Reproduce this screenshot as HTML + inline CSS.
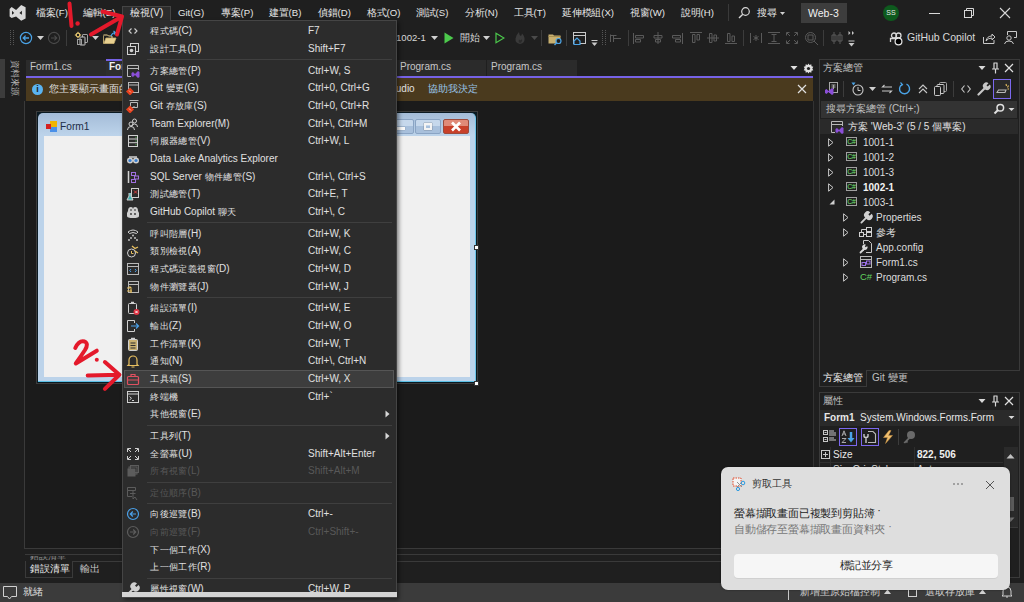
<!DOCTYPE html>
<html><head><meta charset="utf-8">
<style>
*{margin:0;padding:0;box-sizing:border-box}
html,body{width:1024px;height:602px;overflow:hidden;background:#1f1f1f;font-family:"Liberation Sans",sans-serif;color:#e0e0e0;font-size:12px}
.a{position:absolute;white-space:nowrap}
.sx{font-size:10px;color:#dcdcdc;line-height:14px}
.c{font-style:normal;display:inline-block;width:1em;text-align:center}
.L{font-size:10px}
.mb .L{font-size:9.6px}
.mi{font-size:9.4px;line-height:14px;z-index:7}
.mb{top:6px;font-size:9.8px;color:#e6e6e6;line-height:14px}
</style></head><body>
<!-- MENU BAR -->
<div id="menubar">
<svg class="a" style="left:0;top:0" width="34" height="26" viewBox="0 0 34 26"><path d="M9.6 9 L11.6 7.1 L16.1 10.1 L21.2 5 L25.6 7.3 V18.6 L21.2 20.8 L16.1 16.4 L11.6 18.1 L9.6 16.6 Z M12 10.8 L14.2 12.9 L12 14.8 Z M21.9 10.8 V14.8 L19.4 12.9 Z" fill="#d9d9d9" fill-rule="evenodd"/></svg>
<div class="a mb" style="left:36px"><i class="c">檔</i><i class="c">案</i><span class="L">(F)</span></div>
<div class="a mb" style="left:83px"><i class="c">編</i><i class="c">輯</i><span class="L">(E)</span></div>
<div class="a mb" style="left:178px"><span class="L">Git(G)</span></div>
<div class="a mb" style="left:221px"><i class="c">專</i><i class="c">案</i><span class="L">(P)</span></div>
<div class="a mb" style="left:269px"><i class="c">建</i><i class="c">置</i><span class="L">(B)</span></div>
<div class="a mb" style="left:318px"><i class="c">偵</i><i class="c">錯</i><span class="L">(D)</span></div>
<div class="a mb" style="left:367px"><i class="c">格</i><i class="c">式</i><span class="L">(O)</span></div>
<div class="a mb" style="left:416px"><i class="c">測</i><i class="c">試</i><span class="L">(S)</span></div>
<div class="a mb" style="left:465px"><i class="c">分</i><i class="c">析</i><span class="L">(N)</span></div>
<div class="a mb" style="left:514px"><i class="c">工</i><i class="c">具</i><span class="L">(T)</span></div>
<div class="a mb" style="left:562px"><i class="c">延</i><i class="c">伸</i><i class="c">模</i><i class="c">組</i><span class="L">(X)</span></div>
<div class="a mb" style="left:630px"><i class="c">視</i><i class="c">窗</i><span class="L">(W)</span></div>
<div class="a mb" style="left:681px"><i class="c">說</i><i class="c">明</i><span class="L">(H)</span></div>
<div class="a" style="left:728px;top:4px;width:1px;height:17px;background:#3a3a3a"></div>
<div class="a mb" style="left:757px"><i class="c">搜</i><i class="c">尋</i></div>
<div class="a" style="left:801px;top:3px;width:46px;height:20px;background:#3d3d3d"></div>
<div class="a mb" style="left:808px;top:6px;font-size:10.5px;color:#f0f0f0">Web-3</div>
<div class="a" style="left:883px;top:5px;width:16px;height:16px;border-radius:50%;background:#0e5a1e;color:#e8e8e8;font-size:7px;line-height:16px;text-align:center">SS</div>
</div>

<!-- TOOLBAR -->
<svg class="a" style="left:10px;top:30px" width="5" height="16" viewBox="0 0 5 16"><rect x="0" y="0" width="1" height="1" fill="#555"/><rect x="3" y="0" width="1" height="1" fill="#555"/><rect x="0" y="2" width="1" height="1" fill="#555"/><rect x="3" y="2" width="1" height="1" fill="#555"/><rect x="0" y="4" width="1" height="1" fill="#555"/><rect x="3" y="4" width="1" height="1" fill="#555"/><rect x="0" y="6" width="1" height="1" fill="#555"/><rect x="3" y="6" width="1" height="1" fill="#555"/><rect x="0" y="8" width="1" height="1" fill="#555"/><rect x="3" y="8" width="1" height="1" fill="#555"/><rect x="0" y="10" width="1" height="1" fill="#555"/><rect x="3" y="10" width="1" height="1" fill="#555"/><rect x="0" y="12" width="1" height="1" fill="#555"/><rect x="3" y="12" width="1" height="1" fill="#555"/><rect x="0" y="14" width="1" height="1" fill="#555"/><rect x="3" y="14" width="1" height="1" fill="#555"/></svg>
<svg class="a" style="left:19px;top:31px" width="14" height="14" viewBox="0 0 14 14"><circle cx="7" cy="7" r="5.6" fill="none" stroke="#4aa3e6" stroke-width="1.2"/><path d="M10 7 H4.3 M6.6 4.6 L4.2 7 L6.6 9.4" fill="none" stroke="#4aa3e6" stroke-width="1.3"/></svg>
<svg class="a" style="left:37.0px;top:36px" width="7" height="4" viewBox="0 0 7 4"><path d="M0 0 H7 L3.5 4 Z" fill="#d0d0d0"/></svg>
<svg class="a" style="left:47px;top:31px" width="14" height="14" viewBox="0 0 14 14"><circle cx="7" cy="7" r="5.6" fill="none" stroke="#4a4a4a" stroke-width="1.1"/><path d="M4 7 H9.7 M7.4 4.6 L9.8 7 L7.4 9.4" fill="none" stroke="#4a4a4a" stroke-width="1.1"/></svg>
<div class="a" style="left:66px;top:30px;width:1px;height:16px;background:#3c3c3c"></div>
<svg class="a" style="left:74px;top:31px" width="16" height="16" viewBox="0 0 16 16"><rect x="8.5" y="3.5" width="5" height="8" rx="0.5" fill="#1f1f1f" stroke="#a0a0a0"/><rect x="6" y="6" width="5" height="8" rx="0.5" fill="#1f1f1f" stroke="#c8c8c8"/><rect x="3.5" y="8.5" width="4" height="5" fill="none" stroke="#a0a0a0"/><circle cx="4" cy="4" r="1.8" fill="none" stroke="#e8c870" stroke-width="1.2"/><path d="M4 0.8 V2 M4 6 V7.2 M0.8 4 H2 M6 4 H7.2" stroke="#e8c870"/></svg>
<svg class="a" style="left:91.8px;top:36px" width="7" height="4" viewBox="0 0 7 4"><path d="M0 0 H7 L3.5 4 Z" fill="#d0d0d0"/></svg>
<svg class="a" style="left:103px;top:30px" width="14" height="15" viewBox="0 0 14 15"><path d="M0.5 5.5 V13.5 H11 L13 8 H3 L1 13" fill="#e8d090" stroke="#c8b070" stroke-width="0.8"/><path d="M0.5 5 H4.5 L5.5 6 H9 V8" fill="none" stroke="#e8d090"/><path d="M8 6 Q9 3 12 2.5 M10.5 1 L12.5 2.5 L11 4.5" fill="none" stroke="#4aa3e6" stroke-width="1.2"/></svg>
<div class="a mb" style="left:396px;top:31px;color:#d8d8d8"><span class="L">1002-1</span></div>
<svg class="a" style="left:430.5px;top:36px" width="7" height="4" viewBox="0 0 7 4"><path d="M0 0 H7 L3.5 4 Z" fill="#d0d0d0"/></svg>
<svg class="a" style="left:444px;top:32px" width="10" height="12" viewBox="0 0 10 12"><path d="M0.5 0.5 L9.5 6 L0.5 11.5 Z" fill="#4cc94c"/></svg>
<div class="a mb" style="left:460px;top:31px;color:#d8d8d8"><i class="c">開</i><i class="c">始</i></div>
<svg class="a" style="left:482.5px;top:36px" width="7" height="4" viewBox="0 0 7 4"><path d="M0 0 H7 L3.5 4 Z" fill="#d0d0d0"/></svg>
<svg class="a" style="left:495px;top:32px" width="10" height="12" viewBox="0 0 10 12"><path d="M1 1.2 L9 6 L1 10.8 Z" fill="none" stroke="#4cc94c" stroke-width="1.2"/></svg>
<svg class="a" style="left:514px;top:31px" width="12" height="14" viewBox="0 0 12 14"><path d="M6 13 Q1 12 1.5 7.5 Q2 4 5 1 Q5 4 7 5 Q8 3 8 2.5 Q11 5.5 10.5 9 Q10 12.5 6 13 Z" fill="#3a3a3a"/><path d="M6 12 Q4 11 5 8.5 Q7 10 8 8 Q8.5 11 6 12Z" fill="#2a2a2a"/></svg>
<svg class="a" style="left:530.5px;top:36px" width="7" height="4" viewBox="0 0 7 4"><path d="M0 0 H7 L3.5 4 Z" fill="#4a4a4a"/></svg>
<div class="a" style="left:541px;top:30px;width:1px;height:16px;background:#3c3c3c"></div>
<svg class="a" style="left:548px;top:31px" width="15" height="15" viewBox="0 0 15 15"><path d="M0.5 3.5 H5 L6 4.5 H12.5 V12.5 H0.5 Z" fill="#c8b070"/><path d="M0.5 5.5 H12.5" stroke="#a89050"/><circle cx="10.5" cy="10" r="2.5" fill="#1f1f1f" stroke="#4aa3e6" stroke-width="1.2"/><path d="M8.7 11.8 L6.5 14" stroke="#4aa3e6" stroke-width="1.4"/></svg>
<div class="a" style="left:566px;top:30px;width:1px;height:16px;background:#3c3c3c"></div>
<svg class="a" style="left:572px;top:31px" width="16" height="15" viewBox="0 0 16 15"><rect x="1.5" y="1.5" width="12" height="11" fill="none" stroke="#c8c8c8"/><path d="M1.5 4.5 H13.5" stroke="#c8c8c8"/><path d="M2 10 L5 7 L8 10 V13.5 H2 Z" fill="#1f1f1f" stroke="#4aa3e6" stroke-width="1.2"/></svg>
<svg class="a" style="left:591px;top:40px" width="7" height="7" viewBox="0 0 7 7"><path d="M0.5 0.5 H6.5" stroke="#c8c8c8"/><path d="M0.5 2.5 H6.5 L3.5 6 Z" fill="#c8c8c8"/></svg>
<svg class="a" style="left:602px;top:30px" width="5" height="16" viewBox="0 0 5 16"><rect x="0" y="0" width="1" height="1" fill="#555"/><rect x="3" y="0" width="1" height="1" fill="#555"/><rect x="0" y="2" width="1" height="1" fill="#555"/><rect x="3" y="2" width="1" height="1" fill="#555"/><rect x="0" y="4" width="1" height="1" fill="#555"/><rect x="3" y="4" width="1" height="1" fill="#555"/><rect x="0" y="6" width="1" height="1" fill="#555"/><rect x="3" y="6" width="1" height="1" fill="#555"/><rect x="0" y="8" width="1" height="1" fill="#555"/><rect x="3" y="8" width="1" height="1" fill="#555"/><rect x="0" y="10" width="1" height="1" fill="#555"/><rect x="3" y="10" width="1" height="1" fill="#555"/><rect x="0" y="12" width="1" height="1" fill="#555"/><rect x="3" y="12" width="1" height="1" fill="#555"/><rect x="0" y="14" width="1" height="1" fill="#555"/><rect x="3" y="14" width="1" height="1" fill="#555"/></svg>
<svg class="a" style="left:609px;top:31px" width="14" height="14" viewBox="0 0 14 14"><path d="M1.5 3.5 V11 M1.5 4.5 H7.5 M4.5 4.5 V11 M4.5 7.5 H12" fill="none" stroke="#5a5a5a"/></svg>
<div class="a" style="left:628px;top:30px;width:1px;height:16px;background:#3c3c3c"></div>
<svg class="a" style="left:632px;top:31px" width="14" height="14" viewBox="0 0 14 14"><path d="M1.5 2 V13 M3.5 4.5 H11.5 V7 H3.5 Z M3.5 8.5 H8.5 V11 H3.5 Z" fill="none" stroke="#5a5a5a"/></svg>
<svg class="a" style="left:651px;top:31px" width="14" height="14" viewBox="0 0 14 14"><path d="M7 1 V13 M3 4.5 H11 V7 H3 Z M4.5 8.5 H9.5 V11 H4.5 Z" fill="none" stroke="#5a5a5a"/></svg>
<svg class="a" style="left:670px;top:31px" width="14" height="14" viewBox="0 0 14 14"><path d="M12.5 2 V13 M2.5 4.5 H10.5 V7 H2.5 Z M5.5 8.5 H10.5 V11 H5.5 Z" fill="none" stroke="#5a5a5a"/></svg>
<svg class="a" style="left:689px;top:31px" width="14" height="14" viewBox="0 0 14 14"><path d="M1 1.5 H13 M3.5 3.5 V11.5 H6 V3.5 Z M8 3.5 V9 H10.5 V3.5 Z" fill="none" stroke="#5a5a5a"/></svg>
<svg class="a" style="left:706px;top:31px" width="14" height="14" viewBox="0 0 14 14"><path d="M1 7 H13 M3.5 2.5 V11.5 H6 V2.5 Z M8 4 V10 H10.5 V4 Z" fill="none" stroke="#5a5a5a"/></svg>
<svg class="a" style="left:724px;top:31px" width="14" height="14" viewBox="0 0 14 14"><path d="M1 12.5 H13 M3.5 2.5 V10.5 H6 V2.5 Z M8 5 V10.5 H10.5 V5 Z" fill="none" stroke="#5a5a5a"/></svg>
<div class="a" style="left:743px;top:30px;width:1px;height:16px;background:#3c3c3c"></div>
<svg class="a" style="left:749px;top:31px" width="14" height="14" viewBox="0 0 14 14"><path d="M1.5 2 V12 M12.5 2 V12 M7 4 V10 M4.5 5.5 L9.5 8.5 M9.5 5.5 L4.5 8.5" fill="none" stroke="#5a5a5a"/></svg>
<svg class="a" style="left:767px;top:31px" width="14" height="14" viewBox="0 0 14 14"><path d="M1 1.5 H13 M1 12.5 H13 M7 3 V11 M4.5 3.5 H9.5 M4.5 10.5 H9.5" fill="none" stroke="#5a5a5a"/></svg>
<svg class="a" style="left:785px;top:31px" width="14" height="14" viewBox="0 0 14 14"><path d="M1.5 4.5 V1.5 H4.5 M9.5 1.5 H12.5 V4.5 M12.5 9.5 V12.5 H9.5 M4.5 12.5 H1.5 V9.5 M2 2 L5 5 M12 2 L9 5 M12 12 L9 9 M2 12 L5 9" fill="none" stroke="#5a5a5a"/></svg>
<svg class="a" style="left:804px;top:31px" width="15" height="15" viewBox="0 0 15 15"><circle cx="6.5" cy="6.5" r="5" fill="none" stroke="#5a5a5a"/><path d="M10 10 L14 14 M4 4 H9 V9 H4 Z" fill="none" stroke="#5a5a5a"/></svg>
<div class="a" style="left:823px;top:30px;width:1px;height:16px;background:#3c3c3c"></div>
<svg class="a" style="left:830px;top:31px" width="14" height="14" viewBox="0 0 14 14"><path d="M4 1 V13 M10 1 V13 M2 4 H6 V10 H2 Z M8 4 H12 V10 H8 Z" fill="none" stroke="#5a5a5a"/></svg>
<svg class="a" style="left:848px;top:30px" width="7" height="18" viewBox="0 0 7 18"><path d="M0.5 1 L2.5 3 L0.5 5 Z M4 1 L6 3 L4 5 Z" fill="#c8c8c8"/><path d="M0.5 11 H6.5" stroke="#c8c8c8"/><path d="M0.5 13 H6.5 L3.5 16.5 Z" fill="#c8c8c8"/></svg>
<svg class="a" style="left:889px;top:31px" width="15" height="15" viewBox="0 0 15 15"><circle cx="5" cy="4.5" r="2.5" fill="none" stroke="#d8d8d8" stroke-width="1.3"/><circle cx="9.5" cy="4.5" r="2.5" fill="none" stroke="#d8d8d8" stroke-width="1.3"/><path d="M1.5 11 V7.5 H12" fill="none" stroke="#d8d8d8" stroke-width="1.3"/><circle cx="9.5" cy="10.5" r="3.4" fill="#000" stroke="#e8e8e8" stroke-width="1.2"/></svg>
<div class="a" style="left:907px;top:30px;font-size:10.5px;color:#d8d8d8;line-height:14px">GitHub Copilot</div>
<svg class="a" style="left:982px;top:31px" width="14" height="14" viewBox="0 0 14 14"><path d="M1.5 6 V12.5 H12 V9" fill="none" stroke="#c8c8c8"/><path d="M4 10 Q5 5 10 5 V3 L13 6 L10 9 V7 Q6 7 4 10 Z" fill="none" stroke="#c8c8c8"/></svg>
<svg class="a" style="left:1003px;top:30px" width="15" height="15" viewBox="0 0 15 15"><path d="M4.5 5 V1.5 H13.5 V7.5 H11" fill="none" stroke="#c8c8c8"/><circle cx="6" cy="8" r="2.2" fill="none" stroke="#c8c8c8"/><path d="M1.5 14 Q2 11 6 11 Q10 11 10.5 14" fill="none" stroke="#c8c8c8"/></svg>
<svg class="a" style="left:738px;top:6px" width="13" height="13" viewBox="0 0 13 13"><circle cx="7.5" cy="5.5" r="3.8" fill="none" stroke="#d8d8d8" stroke-width="1.2"/><path d="M4.8 8.2 L1 12" stroke="#d8d8d8" stroke-width="1.4"/></svg>
<svg class="a" style="left:780px;top:12px" width="5" height="3" viewBox="0 0 5 3"><path d="M0 0 H5 L2.5 3 Z" fill="#d0d0d0"/></svg>
<div class="a" style="left:929px;top:13px;width:11px;height:1px;background:#d8d8d8"></div>
<svg class="a" style="left:963px;top:7px" width="12" height="12" viewBox="0 0 12 12"><path d="M3.5 3 V1.5 H10.5 V8.5 H9" fill="none" stroke="#d8d8d8"/><rect x="1.5" y="3.5" width="7" height="7" fill="none" stroke="#d8d8d8"/></svg>
<svg class="a" style="left:999px;top:7px" width="12" height="12" viewBox="0 0 12 12"><path d="M1 1 L11 11 M11 1 L1 11" stroke="#d8d8d8" stroke-width="1.1"/></svg>
<!-- LEFT STRIP -->
<div class="a" style="left:0;top:59px;width:5px;height:39px;background:#3c3c3c"></div>
<div class="a" style="left:20px;top:60px;font-size:9px;color:#b0b0b0;line-height:10px;transform-origin:0 0;transform:rotate(90deg)"><i class="c">資</i><i class="c">料</i><i class="c">來</i><i class="c">源</i></div>
<!-- EDITOR BORDER -->
<div class="a" style="left:24px;top:101px;width:1px;height:448px;background:#3a3a3a"></div>
<div class="a" style="left:24px;top:548px;width:790px;height:1px;background:#3a3a3a"></div>
<!-- TABS -->
<div class="a" style="left:26px;top:60px;width:80px;height:16px;background:#2b2b2b"></div>
<div class="a" style="left:30px;top:60px;font-size:10px;color:#c8c8c8;line-height:14px">Form1.cs</div>
<div class="a" style="left:106px;top:59px;width:86px;height:17px;background:#2e2e2e;border-top:2px solid #7662e6"></div>
<div class="a" style="left:109px;top:60px;font-size:10px;color:#f0f0f0;font-weight:bold;line-height:14px">Form1.cs [<i class="c">設</i><i class="c">計</i>]</div>
<div class="a" style="left:396px;top:60px;width:90px;height:16px;background:#2b2b2b"></div>
<div class="a" style="left:400px;top:60px;font-size:10px;color:#c8c8c8;line-height:14px">Program.cs</div>
<div class="a" style="left:487px;top:60px;width:90px;height:16px;background:#2b2b2b"></div>
<div class="a" style="left:491px;top:60px;font-size:10px;color:#c8c8c8;line-height:14px">Program.cs</div>
<div class="a" style="left:26px;top:76px;width:787px;height:2px;background:#7662e6"></div>
<!-- INFOBAR -->
<div class="a" style="left:26px;top:78px;width:787px;height:23px;background:#4a3a1e"></div>
<div class="a" style="left:32px;top:84px;width:11px;height:11px;border-radius:50%;background:#5ab4f0;color:#1a1a1a;font-size:9px;line-height:11px;text-align:center;font-weight:bold">i</div>
<div class="a" style="left:49px;top:82px;width:73px;overflow:hidden;font-size:10px;color:#e0e0e0;line-height:14px"><i class="c">您</i><i class="c">主</i><i class="c">要</i><i class="c">顯</i><i class="c">示</i><i class="c">畫</i><i class="c">面</i><i class="c">的</i><i class="c">縮</i><i class="c">放</i><i class="c">比</i><i class="c">例</i></div><div class="a" style="left:393px;top:82px;font-size:10px;color:#e0e0e0;line-height:14px">tudio</div>
<div class="a" style="left:428px;top:82px;font-size:10px;color:#98c4e8;line-height:14px"><i class="c">協</i><i class="c">助</i><i class="c">我</i><i class="c">決</i><i class="c">定</i></div>
<svg class="a" style="left:797px;top:84px" width="10" height="10" viewBox="0 0 10 10"><path d="M1 1 L9 9 M9 1 L1 9" stroke="#e0e0e0" stroke-width="1.2"/></svg>
<svg class="a" style="left:790px;top:65px" width="8" height="6" viewBox="0 0 8 6"><path d="M0.5 1 H7.5 L4 5 Z" fill="#e0e0e0"/></svg>
<svg class="a" style="left:803px;top:63px" width="11" height="11" viewBox="0 0 11 11"><path d="M5.5 0.5 L6.5 2 L8.3 1.3 L8.5 3.2 L10.3 3.8 L9.3 5.5 L10.3 7.2 L8.5 7.8 L8.3 9.7 L6.5 9 L5.5 10.5 L4.5 9 L2.7 9.7 L2.5 7.8 L0.7 7.2 L1.7 5.5 L0.7 3.8 L2.5 3.2 L2.7 1.3 L4.5 2 Z" fill="#e0e0e0"/><circle cx="5.5" cy="5.5" r="1.6" fill="#1f1f1f"/></svg>

<!-- DESIGNER FORM -->
<div class="a" style="left:25px;top:101px;width:788px;height:447px;background:#1b1b1b"></div>
<div class="a" style="left:813px;top:101px;width:1px;height:482px;background:#333"></div>
<div class="a" style="left:36px;top:111px;width:442px;height:273px;border:1px solid #3c3c3c"></div>
<div class="a" style="left:37px;top:112px;width:440px;height:271px;background:#0b1a22"></div>
<div class="a" style="left:38px;top:113px;width:438px;height:269px;border-radius:5px 5px 0 0;background:linear-gradient(#a4bcd8,#bcd3ea 22px,#bcd3ea);border-bottom:1px solid #5bc0e6;border-right:1px solid #6cc4e8"></div>
<div class="a" style="left:44px;top:136px;width:426px;height:241px;background:#f0f0f0"></div>
<svg class="a" style="left:45px;top:120px" width="13" height="13" viewBox="0 0 13 13"><rect x="5" y="1" width="7" height="6" fill="#f0b400"/><rect x="5" y="7" width="7" height="5" fill="#4a90e8"/><rect x="1" y="4" width="5" height="5" fill="#d42020"/></svg>
<div class="a" style="left:60px;top:120px;font-size:10.2px;color:#1e2e48;line-height:14px">Form1</div>
<div class="a" style="left:388px;top:119px;width:26px;height:15px;border:1px solid #8aa4c4;border-radius:2px;background:linear-gradient(#c6d8ec 50%,#a8c0dc 50%)"></div>
<div class="a" style="left:393px;top:127px;width:12px;height:3px;background:#fafafa;box-shadow:0 0 1px #555"></div>
<div class="a" style="left:415px;top:119px;width:26px;height:15px;border:1px solid #8aa4c4;border-radius:2px;background:linear-gradient(#c6d8ec 50%,#a8c0dc 50%)"></div>
<div class="a" style="left:424px;top:123px;width:8px;height:7px;border:2px solid #f4f4f4;box-shadow:0 0 1px #444"></div>
<div class="a" style="left:443px;top:119px;width:26px;height:15px;border:1px solid #9c4a3c;border-radius:2px;background:linear-gradient(#e08a78 45%,#c8402a 45%)"></div>
<svg class="a" style="left:450px;top:121px" width="12" height="11" viewBox="0 0 12 11"><path d="M2 1.5 L10 9.5 M10 1.5 L2 9.5" stroke="#fff" stroke-width="2.6"/></svg>
<div class="a" style="left:474px;top:245px;width:5px;height:5px;background:#fff;border:1px solid #333"></div>
<div class="a" style="left:474px;top:381px;width:5px;height:5px;background:#fff;border:1px solid #333"></div>
<!-- BOTTOM PANEL -->
<div class="a" style="left:25px;top:554px;width:790px;height:1px;background:#3a3a3a"></div>
<div class="a" style="left:25px;top:561px;width:48px;height:17px;border:1px solid #3a3a3a;border-top:none"></div>
<div class="a" style="left:73px;top:561px;width:742px;height:1px;background:#3a3a3a"></div>
<div class="a" style="left:30px;top:562px;font-size:10px;color:#e8e8e8;line-height:14px"><i class="c">錯</i><i class="c">誤</i><i class="c">清</i><i class="c">單</i></div>
<div class="a" style="left:80px;top:562px;font-size:10px;color:#c8c8c8;line-height:14px"><i class="c">輸</i><i class="c">出</i></div>
<div class="a" style="left:30px;top:556px;height:5px;overflow:hidden"><div style="margin-top:-5px;font-size:9px;color:#909090;line-height:10px"><i class="c">錯</i><i class="c">誤</i><i class="c">清</i><i class="c">單</i></div></div>
<!-- STATUS BAR -->
<div class="a" style="left:0;top:583px;width:1024px;height:19px;background:#3b3b3b"></div>
<svg class="a" style="left:2px;top:585px" width="16" height="16" viewBox="0 0 16 16"><path d="M1.5 1.5 H14.5 V11.5 H9.5 L7.5 14 L5.5 11.5 H1.5 Z" fill="none" stroke="#d0d0d0" stroke-width="1"/></svg>
<div class="a" style="left:23px;top:585px;font-size:10px;color:#e0e0e0;line-height:14px"><i class="c">就</i><i class="c">緒</i></div>
<div class="a" style="left:788px;top:590px;width:1px;height:10px;background:#c8c8c8"></div>
<div class="a" style="left:800px;top:585px;font-size:10px;color:#d0d0d0;line-height:14px"><i class="c">新</i><i class="c">增</i><i class="c">至</i><i class="c">原</i><i class="c">始</i><i class="c">檔</i><i class="c">控</i><i class="c">制</i><svg width="7" height="5" viewBox="0 0 7 5" style="margin-left:4px;vertical-align:1px"><path d="M0 5 H7 L3.5 0.5 Z" fill="#d0d0d0"/></svg></div>
<div class="a" style="left:908px;top:585px;width:9px;height:12px;border:1px solid #d0d0d0"></div>
<div class="a" style="left:925px;top:585px;font-size:10px;color:#d0d0d0;line-height:14px"><i class="c">選</i><i class="c">取</i><i class="c">存</i><i class="c">放</i><i class="c">庫</i><svg width="7" height="5" viewBox="0 0 7 5" style="margin-left:4px;vertical-align:1px"><path d="M0 5 H7 L3.5 0.5 Z" fill="#d0d0d0"/></svg></div>
<svg class="a" style="left:1000px;top:585px" width="14" height="14" viewBox="0 0 14 14"><path d="M3 10 V6 A4 4 0 0 1 11 6 V10 L12 11 H2 Z M6 12 H8" fill="none" stroke="#d0d0d0"/></svg>

<!-- SOLUTION EXPLORER -->
<div class="a" style="left:819px;top:59px;width:201px;height:312px;border:1px solid #3a3a3a"></div>
<div class="a" style="left:823px;top:61px;font-size:10px;color:#c0c0c0;line-height:14px"><i class="c">方</i><i class="c">案</i><i class="c">總</i><i class="c">管</i></div>
<svg class="a" style="left:978px;top:65px" width="8" height="6" viewBox="0 0 8 6"><path d="M0.5 1 H7.5 L4 5 Z" fill="#d8d8d8"/></svg>
<svg class="a" style="left:991px;top:62px" width="9" height="12" viewBox="0 0 9 12"><path d="M2.5 1 H6.5 M3 1 V7 M6 1 V7 M1 7 H8 M4.5 7 V11.5" fill="none" stroke="#d8d8d8" stroke-width="1.2"/></svg>
<svg class="a" style="left:1004px;top:63px" width="10" height="10" viewBox="0 0 10 10"><path d="M1 1 L9 9 M9 1 L1 9" stroke="#e0e0e0" stroke-width="1.2"/></svg>
<div class="a" style="left:993px;top:79px;width:18px;height:20px;border:1px solid #7b68ee;background:#2a2a2a"></div>
<div class="a" style="left:821px;top:101px;width:196px;height:17px;background:#333333"></div>
<div class="a" style="left:826px;top:102px;font-size:10px;color:#c0c0c0;line-height:14px"><i class="c">搜</i><i class="c">尋</i><i class="c">方</i><i class="c">案</i><i class="c">總</i><i class="c">管</i> (Ctrl+;)</div>
<svg class="a" style="left:993px;top:103px" width="12" height="12" viewBox="0 0 12 12"><circle cx="7.3" cy="4.7" r="3.3" fill="none" stroke="#e0e0e0" stroke-width="1.5"/><path d="M5 7 L1.5 10.5" stroke="#e0e0e0" stroke-width="2"/></svg>
<svg class="a" style="left:1008px;top:107px" width="7" height="5" viewBox="0 0 7 5"><path d="M0.5 1 H6.5 L3.5 4 Z" fill="#d8d8d8"/></svg>
<div class="a" style="left:820px;top:119px;width:198px;height:15px;background:#2a2a2a"></div>
<svg class="a" style="left:830px;top:120px" width="14" height="14" viewBox="0 0 14 14"><path d="M12.5 6 V1.5 H1.5 V12.5 H5" fill="none" stroke="#b8b8b8"/><path d="M1.5 4.5 H12.5" stroke="#b8b8b8"/><path d="M5.5 9 L7 8 L9 10 L12 7 L13.5 8 V13 L12 14 L9 11 L7 13 L5.5 12 Z" fill="#8b4fd8"/></svg>
<div class="a sx" style="left:848px;top:120px;color:#e0e0e0"><i class="c">方</i><i class="c">案</i> 'Web-3' (5 / 5 <i class="c">個</i><i class="c">專</i><i class="c">案</i>)</div>
<svg class="a" style="left:828px;top:138px" width="6" height="9" viewBox="0 0 6 9"><path d="M0.6 0.8 L5 4.5 L0.6 8.2 Z" fill="none" stroke="#c8c8c8" stroke-width="1"/></svg><div class="a" style="left:846px;top:137px;width:11px;height:9px;border:1px solid #a0a0a0;background:#1f1f1f;color:#74e474;font-size:7px;line-height:7px;text-align:center;letter-spacing:-0.3px">C#</div><div class="a sx" style="left:863px;top:136px;">1001-1</div><svg class="a" style="left:828px;top:153px" width="6" height="9" viewBox="0 0 6 9"><path d="M0.6 0.8 L5 4.5 L0.6 8.2 Z" fill="none" stroke="#c8c8c8" stroke-width="1"/></svg><div class="a" style="left:846px;top:152px;width:11px;height:9px;border:1px solid #a0a0a0;background:#1f1f1f;color:#74e474;font-size:7px;line-height:7px;text-align:center;letter-spacing:-0.3px">C#</div><div class="a sx" style="left:863px;top:151px;">1001-2</div><svg class="a" style="left:828px;top:168px" width="6" height="9" viewBox="0 0 6 9"><path d="M0.6 0.8 L5 4.5 L0.6 8.2 Z" fill="none" stroke="#c8c8c8" stroke-width="1"/></svg><div class="a" style="left:846px;top:167px;width:11px;height:9px;border:1px solid #a0a0a0;background:#1f1f1f;color:#74e474;font-size:7px;line-height:7px;text-align:center;letter-spacing:-0.3px">C#</div><div class="a sx" style="left:863px;top:166px;">1001-3</div><svg class="a" style="left:828px;top:183px" width="6" height="9" viewBox="0 0 6 9"><path d="M0.6 0.8 L5 4.5 L0.6 8.2 Z" fill="none" stroke="#c8c8c8" stroke-width="1"/></svg><div class="a" style="left:846px;top:182px;width:11px;height:9px;border:1px solid #a0a0a0;background:#1f1f1f;color:#74e474;font-size:7px;line-height:7px;text-align:center;letter-spacing:-0.3px">C#</div><div class="a sx" style="left:863px;top:181px;font-weight:bold;color:#f4f4f4">1002-1</div><svg class="a" style="left:829px;top:199px" width="6" height="6" viewBox="0 0 6 6"><path d="M5.5 0.5 V5.5 H0.5 Z" fill="#d0d0d0"/></svg><div class="a" style="left:846px;top:197px;width:11px;height:9px;border:1px solid #a0a0a0;background:#1f1f1f;color:#74e474;font-size:7px;line-height:7px;text-align:center;letter-spacing:-0.3px">C#</div><div class="a sx" style="left:863px;top:196px">1003-1</div><svg class="a" style="left:843px;top:213px" width="6" height="9" viewBox="0 0 6 9"><path d="M0.6 0.8 L5 4.5 L0.6 8.2 Z" fill="none" stroke="#c8c8c8" stroke-width="1"/></svg><svg class="a" style="left:860px;top:211px" width="13" height="13" viewBox="0 0 14 14"><path d="M1.5 12.5 L6.5 7.5" stroke="#d0d0d0" stroke-width="2" stroke-linecap="round"/><path d="M5.5 7 A3.8 3.8 0 0 1 11 1.5 L9 3.6 L10.4 5 L12.5 3 A3.8 3.8 0 0 1 7 8.5 Z" fill="#d0d0d0"/></svg><div class="a sx" style="left:876px;top:211px">Properties</div><svg class="a" style="left:843px;top:228px" width="6" height="9" viewBox="0 0 6 9"><path d="M0.6 0.8 L5 4.5 L0.6 8.2 Z" fill="none" stroke="#c8c8c8" stroke-width="1"/></svg><svg class="a" style="left:859px;top:226px" width="14" height="12" viewBox="0 0 14 12"><rect x="0.5" y="6.5" width="4" height="4" fill="none" stroke="#d0d0d0"/><rect x="7.5" y="1.5" width="5" height="4" fill="none" stroke="#d0d0d0"/><rect x="7.5" y="6.5" width="5" height="4" fill="none" stroke="#d0d0d0"/><path d="M4.5 8.5 H7.5 M2.5 6.5 V3.5 H7.5" fill="none" stroke="#d0d0d0"/></svg><div class="a sx" style="left:876px;top:226px"><i class="c">參</i><i class="c">考</i></div><svg class="a" style="left:859px;top:240px" width="14" height="14" viewBox="0 0 14 14"><path d="M4.5 4 V0.5 H9.5 L12.5 3.5 V12.5 H7" fill="none" stroke="#c8c8c8"/><path d="M1.5 12.5 L4.5 9.5" stroke="#d8d8d8" stroke-width="1.8" stroke-linecap="round"/><path d="M3.5 8.5 A2.6 2.6 0 0 1 7 4.8 L5.8 6.2 L6.8 7.2 L8.2 6 A2.6 2.6 0 0 1 4.5 9.5 Z" fill="#d8d8d8"/></svg><div class="a sx" style="left:876px;top:241px">App.config</div><svg class="a" style="left:843px;top:258px" width="6" height="9" viewBox="0 0 6 9"><path d="M0.6 0.8 L5 4.5 L0.6 8.2 Z" fill="none" stroke="#c8c8c8" stroke-width="1"/></svg><svg class="a" style="left:860px;top:256px" width="12" height="12" viewBox="0 0 12 12"><rect x="0.5" y="0.5" width="11" height="11" fill="none" stroke="#b8b8b8"/><path d="M0.5 3.5 H11.5" stroke="#b8b8b8"/><rect x="2" y="6.5" width="3.5" height="3" fill="none" stroke="#9b6fe8"/><rect x="6.5" y="5" width="3.5" height="3" fill="none" stroke="#9b6fe8"/></svg><div class="a sx" style="left:876px;top:256px">Form1.cs</div><svg class="a" style="left:843px;top:273px" width="6" height="9" viewBox="0 0 6 9"><path d="M0.6 0.8 L5 4.5 L0.6 8.2 Z" fill="none" stroke="#c8c8c8" stroke-width="1"/></svg><div class="a" style="left:860px;top:271px;font-size:9.5px;color:#5fd35f;line-height:12px">C#</div><div class="a sx" style="left:876px;top:271px">Program.cs</div>
<div class="a" style="left:819px;top:370px;width:48px;height:17px;border:1px solid #3a3a3a;border-top:none;background:#1f1f1f"></div>
<div class="a" style="left:823px;top:371px;font-size:10px;color:#e8e8e8;line-height:14px"><i class="c">方</i><i class="c">案</i><i class="c">總</i><i class="c">管</i></div>
<div class="a" style="left:872px;top:371px;font-size:10px;color:#c0c0c0;line-height:14px">Git <i class="c">變</i><i class="c">更</i></div>

<svg class="a" style="left:824px;top:82px" width="15" height="14" viewBox="0 0 15 14"><rect x="5.5" y="0.5" width="8" height="10" fill="#1f1f1f" stroke="#a8a8a8"/><path d="M7.5 3 H11.5 M7.5 5 H11.5 M9.5 3 V7" stroke="#a8a8a8"/><path d="M1 8 L2.5 7 L4.5 9 L8 6 L9.5 7 V12 L8 13 L4.5 10 L2.5 12 L1 11 Z" fill="#8b4fd8"/></svg>
<div class="a" style="left:843px;top:81px;width:1px;height:16px;background:#3c3c3c"></div>
<svg class="a" style="left:851px;top:82px" width="13" height="14" viewBox="0 0 13 14"><circle cx="7" cy="8" r="5" fill="none" stroke="#c8c8c8" stroke-width="1.1"/><path d="M7 5 V8.5 H9.5" fill="none" stroke="#c8c8c8"/><path d="M0.5 0.5 H4.5 L2.5 3.5 Z" fill="#4aa3e6"/></svg>
<svg class="a" style="left:869px;top:87px" width="7" height="4" viewBox="0 0 7 4"><path d="M0 0 H7 L3.5 4 Z" fill="#d0d0d0"/></svg>
<svg class="a" style="left:881px;top:84px" width="12" height="10" viewBox="0 0 12 10"><path d="M11 3 H1.5 L3.5 1 M1 7 H10.5 L8.5 9" fill="none" stroke="#c8c8c8" stroke-width="1.1"/></svg>
<svg class="a" style="left:898px;top:82px" width="13" height="14" viewBox="0 0 13 14"><path d="M4 2.5 A5 5 0 1 0 8.5 2.2" fill="none" stroke="#4aa3e6" stroke-width="1.4"/><path d="M2.5 0.5 L4.5 2.6 L2.3 4.3" fill="none" stroke="#4aa3e6" stroke-width="1.2"/></svg>
<svg class="a" style="left:918px;top:84px" width="10" height="10" viewBox="0 0 10 10"><path d="M1 5 L5 1 L9 5 M1 9 L5 5 L9 9" fill="none" stroke="#c8c8c8" stroke-width="1.1"/></svg>
<svg class="a" style="left:934px;top:82px" width="14" height="14" viewBox="0 0 14 14"><rect x="5.5" y="0.5" width="7" height="9" rx="1" fill="#1f1f1f" stroke="#a8a8a8"/><rect x="3" y="2.5" width="7" height="9" rx="1" fill="#1f1f1f" stroke="#c8c8c8"/><rect x="0.5" y="4.5" width="6" height="9" rx="1" fill="#1f1f1f" stroke="#c8c8c8"/></svg>
<div class="a" style="left:953px;top:81px;width:1px;height:16px;background:#3c3c3c"></div>
<svg class="a" style="left:961px;top:85px" width="10" height="8" viewBox="0 0 10 8"><path d="M3.5 0.5 L0.7 4 L3.5 7.5 M6.5 0.5 L9.3 4 L6.5 7.5" fill="none" stroke="#c8c8c8" stroke-width="1.1"/></svg>
<svg class="a" style="left:977px;top:82px" width="14" height="14" viewBox="0 0 14 14"><path d="M1.5 12.5 L7 7" stroke="#c8c8c8" stroke-width="2.2" stroke-linecap="round"/><path d="M6.5 6 A3.5 3.5 0 0 1 11.5 1.2 L9.5 3.3 L10.7 4.5 L12.8 2.5 A3.5 3.5 0 0 1 8 7.5 Z" fill="#c8c8c8"/></svg>
<svg class="a" style="left:996px;top:82px" width="14" height="14" viewBox="0 0 14 14"><path d="M1 10.5 L2.5 8 H10 L9 10.5 Z" fill="none" stroke="#b8b8b8" stroke-width="1.1"/><path d="M10 2 L10.5 4 M12.5 3.5 L11.5 5.5 M13 7 L11.5 7" stroke="#e8c060" stroke-width="1.1"/></svg>
<!-- props toolbar -->
<svg class="a" style="left:823px;top:430px" width="14" height="13" viewBox="0 0 14 13"><rect x="0.5" y="0.5" width="4" height="4" fill="none" stroke="#c8c8c8"/><rect x="0.5" y="7.5" width="4" height="4" fill="none" stroke="#c8c8c8"/><path d="M1.5 2.5 H3.5 M1.5 9.5 H3.5 M6 1 H11 M6 3 H13 M6 5 H13 M6 8 H11 M6 10 H13" stroke="#c8c8c8"/></svg>
<svg class="a" style="left:841px;top:430px" width="15" height="14" viewBox="0 0 15 14"><path d="M1 6 L3 0.8 L5 6 M1.8 4 H4.2 M1 8.5 H5 L1 12.5 H5" fill="none" stroke="#b8b8b8" stroke-width="0.9"/><path d="M10 2 V9" stroke="#4aa3e6" stroke-width="2.5"/><path d="M6.5 8 H13.5 L10 12.5 Z" fill="#4aa3e6"/></svg>
<svg class="a" style="left:862px;top:430px" width="15" height="14" viewBox="0 0 15 14"><path d="M6 1.5 H11 L13.5 4 V12.5 H6" fill="none" stroke="#b8b8b8" stroke-width="1.1"/><path d="M4 13 V7 M2 4 V6 Q2 7.5 4 7.5 Q6 7.5 6 6 V4" fill="none" stroke="#c8c8c8" stroke-width="1.4"/></svg>
<svg class="a" style="left:882px;top:430px" width="12" height="14" viewBox="0 0 12 14"><path d="M7 0.5 L1.5 7.5 H5.5 L3.5 13.5 L10.5 5.5 H6.5 L9 0.5 Z" fill="#f0c070" stroke="#c89040" stroke-width="0.5"/></svg>
<div class="a" style="left:898px;top:429px;width:1px;height:16px;background:#3c3c3c"></div>
<svg class="a" style="left:902px;top:430px" width="14" height="14" viewBox="0 0 14 14"><circle cx="9" cy="5" r="4" fill="#6a6a6a"/><path d="M6.5 7.5 L1.5 12.5 L3 13.5 L4 12.5 L5 13 L6 12 L5.5 11 L8 8.5" fill="#6a6a6a"/></svg>
<!-- PROPERTIES -->
<div class="a" style="left:819px;top:392px;width:201px;height:186px;border:1px solid #3a3a3a"></div>
<div class="a" style="left:823px;top:394px;font-size:10px;color:#c0c0c0;line-height:14px"><i class="c">屬</i><i class="c">性</i></div>
<svg class="a" style="left:978px;top:398px" width="8" height="6" viewBox="0 0 8 6"><path d="M0.5 1 H7.5 L4 5 Z" fill="#d8d8d8"/></svg>
<svg class="a" style="left:991px;top:395px" width="9" height="12" viewBox="0 0 9 12"><path d="M2.5 1 H6.5 M3 1 V7 M6 1 V7 M1 7 H8 M4.5 7 V11.5" fill="none" stroke="#d8d8d8" stroke-width="1.2"/></svg>
<svg class="a" style="left:1004px;top:396px" width="10" height="10" viewBox="0 0 10 10"><path d="M1 1 L9 9 M9 1 L1 9" stroke="#e0e0e0" stroke-width="1.2"/></svg>
<div class="a" style="left:820px;top:410px;width:199px;height:16px;background:#2a2a2a"></div>
<div class="a" style="left:824px;top:411px;font-size:10px;color:#e8e8e8;line-height:14px"><b>Form1</b>&nbsp; System.Windows.Forms.Form</div>
<svg class="a" style="left:1008px;top:415px" width="7" height="5" viewBox="0 0 7 5"><path d="M0.5 1 H6.5 L3.5 4 Z" fill="#d8d8d8"/></svg>
<div class="a" style="left:839px;top:428px;width:18px;height:18px;border:1px solid #7b68ee"></div>
<div class="a" style="left:861px;top:428px;width:18px;height:18px;border:1px solid #7b68ee"></div>
<div class="a" style="left:820px;top:447px;width:184px;height:80px;background:#1f1f1f"></div><div class="a" style="left:1004px;top:447px;width:14px;height:80px;background:#2a2a2a"></div><div class="a" style="left:1010px;top:497px;width:4px;height:14px;background:#5a5a5a"></div><svg class="a" style="left:1006px;top:517px" width="9" height="6" viewBox="0 0 9 6"><path d="M0.5 0.5 H8.5 L4.5 5 Z" fill="#707070"/></svg><div class="a" style="left:820px;top:527px;width:198px;height:1px;background:#3a3a3a"></div><div class="a sx" style="left:833px;top:463px;color:#e8e8e8">SizeGripStyle</div><div class="a sx" style="left:917px;top:463px;color:#e8e8e8">Auto</div>
<div class="a" style="left:830px;top:447px;width:1px;height:80px;background:#2e2e2e"></div>
<div class="a" style="left:914px;top:447px;width:1px;height:80px;background:#2e2e2e"></div>
<div class="a" style="left:820px;top:462px;width:183px;height:1px;background:#2e2e2e"></div>
<svg class="a" style="left:821px;top:450px" width="9" height="9" viewBox="0 0 9 9"><rect x="0.5" y="0.5" width="8" height="8" fill="none" stroke="#c8c8c8"/><path d="M2 4.5 H7 M4.5 2 V7" stroke="#c8c8c8"/></svg>
<div class="a sx" style="left:833px;top:448px;color:#e8e8e8">Size</div>
<div class="a sx" style="left:917px;top:448px;color:#f0f0f0;font-weight:bold">822, 506</div>
<svg class="a" style="left:1006px;top:453px" width="9" height="6" viewBox="0 0 9 6"><path d="M0.5 5.5 H8.5 L4.5 1 Z" fill="#c0c0c0"/></svg>
<!-- MENU START -->
<div class="a" style="left:122px;top:6px;width:49px;height:15px;background:#2c2c2c;border:1px solid #454545;border-bottom:none;z-index:5"></div>
<div class="a" style="left:130px;top:6px;font-size:10px;color:#e8e8e8;line-height:14px;z-index:6"><i class="c">檢</i><i class="c">視</i>(V)</div>
<div class="a" style="left:122px;top:20px;width:275px;height:578px;background:#2c2c2c;border:1px solid #454545;z-index:5;box-shadow:2px 2px 4px rgba(0,0,0,.45)"></div>
<div class="a" style="left:123px;top:20px;width:47px;height:1px;background:#2c2c2c;z-index:6"></div>
<div class="a" style="left:126px;top:24.45px;z-index:7;line-height:0"><svg width="14" height="14" viewBox="0 0 14 14"><path d="M5.5 4.5 L3 7 L5.5 9.5 M8.5 4.5 L11 7 L8.5 9.5" fill="none" stroke="#d0d0d0" stroke-width="1.1"/></svg></div>
<div class="a mi" style="left:150px;top:24.45px;color:#e0e0e0"><i class="c">程</i><i class="c">式</i><i class="c">碼</i><span class="L">(C)</span></div>
<div class="a mi" style="left:308px;top:24.45px;color:#e0e0e0"><span class="L">F7</span></div>
<div class="a" style="left:126px;top:42.11px;z-index:7;line-height:0"><svg width="14" height="14" viewBox="0 0 14 14"><rect x="4.5" y="1.5" width="8" height="8" fill="none" stroke="#d0d0d0"/><rect x="1.5" y="4.5" width="8" height="8" fill="#2e2e2e" stroke="#d0d0d0"/><circle cx="5.5" cy="8.5" r="1.8" fill="#d0d0d0"/></svg></div>
<div class="a mi" style="left:150px;top:42.11px;color:#e0e0e0"><i class="c">設</i><i class="c">計</i><i class="c">工</i><i class="c">具</i><span class="L">(D)</span></div>
<div class="a mi" style="left:308px;top:42.11px;color:#e0e0e0"><span class="L">Shift+F7</span></div>
<div class="a" style="left:147px;top:59.41px;width:245px;height:1px;background:#3f3f3f;z-index:6"></div>
<div class="a" style="left:126px;top:63.75px;z-index:7;line-height:0"><svg width="14" height="14" viewBox="0 0 14 14"><path d="M12.5 6 V1.5 H1.5 V12.5 H5" fill="none" stroke="#b8b8b8"/><path d="M1.5 4.5 H12.5" stroke="#b8b8b8"/><path d="M5.5 9 L7 8 L9 10 L12 7 L13.5 8 V13 L12 14 L9 11 L7 13 L5.5 12 Z" fill="#8b4fd8"/></svg></div>
<div class="a mi" style="left:150px;top:63.75px;color:#e0e0e0"><i class="c">方</i><i class="c">案</i><i class="c">總</i><i class="c">管</i><span class="L">(P)</span></div>
<div class="a mi" style="left:308px;top:63.75px;color:#e0e0e0"><span class="L">Ctrl+W, S</span></div>
<div class="a" style="left:126px;top:81.41px;z-index:7;line-height:0"><svg width="14" height="14" viewBox="0 0 14 14"><rect x="2.5" y="1.5" width="10" height="10" fill="none" stroke="#b8b8b8"/><path d="M2.5 4 H12.5" stroke="#b8b8b8"/><path d="M4 6.5 L8 10.5 L4 14.5 L0 10.5 Z" fill="#e8401c"/><path d="M3 9.5 L5 11.5" stroke="#fff" stroke-width="0.6"/></svg></div>
<div class="a mi" style="left:150px;top:81.41px;color:#e0e0e0"><span class="L">Git</span> <i class="c">變</i><i class="c">更</i><span class="L">(G)</span></div>
<div class="a mi" style="left:308px;top:81.41px;color:#e0e0e0"><span class="L">Ctrl+0, Ctrl+G</span></div>
<div class="a" style="left:126px;top:99.07px;z-index:7;line-height:0"><svg width="14" height="14" viewBox="0 0 14 14"><path d="M3.5 1.5 H12.5 M4.5 3.5 H11.5 V8.5 H4.5 Z" fill="none" stroke="#b8b8b8"/><path d="M7 8 H9" stroke="#b8b8b8"/><path d="M4 6.5 L8 10.5 L4 14.5 L0 10.5 Z" fill="#e8401c"/><path d="M3 9.5 L5 11.5" stroke="#fff" stroke-width="0.6"/></svg></div>
<div class="a mi" style="left:150px;top:99.07px;color:#e0e0e0"><span class="L">Git</span> <i class="c">存</i><i class="c">放</i><i class="c">庫</i><span class="L">(S)</span></div>
<div class="a mi" style="left:308px;top:99.07px;color:#e0e0e0"><span class="L">Ctrl+0, Ctrl+R</span></div>
<div class="a" style="left:126px;top:116.73px;z-index:7;line-height:0"><svg width="14" height="14" viewBox="0 0 14 14"><circle cx="8.5" cy="4" r="2" fill="none" stroke="#d0d0d0"/><path d="M5.5 10 A3 3 0 0 1 11.5 10" fill="none" stroke="#d0d0d0"/><circle cx="5" cy="7" r="2" fill="none" stroke="#d0d0d0"/><path d="M1.5 13 A3.5 3.5 0 0 1 8.5 13" fill="none" stroke="#d0d0d0"/></svg></div>
<div class="a mi" style="left:150px;top:116.73px;color:#e0e0e0"><span class="L">Team Explorer(M)</span></div>
<div class="a mi" style="left:308px;top:116.73px;color:#e0e0e0"><span class="L">Ctrl+\, Ctrl+M</span></div>
<div class="a" style="left:126px;top:134.39px;z-index:7;line-height:0"><svg width="14" height="14" viewBox="0 0 14 14"><rect x="2.5" y="1.5" width="9" height="11" fill="none" stroke="#d0d0d0"/><path d="M2.5 5 H11.5 M2.5 8.7 H11.5" stroke="#d0d0d0"/><path d="M9.5 3.3 H10.5 M9.5 7 H10.5 M9.5 10.7 H10.5" stroke="#5fd35f"/></svg></div>
<div class="a mi" style="left:150px;top:134.39px;color:#e0e0e0"><i class="c">伺</i><i class="c">服</i><i class="c">器</i><i class="c">總</i><i class="c">管</i><span class="L">(V)</span></div>
<div class="a mi" style="left:308px;top:134.39px;color:#e0e0e0"><span class="L">Ctrl+W, L</span></div>
<div class="a" style="left:126px;top:152.05px;z-index:7;line-height:0"><svg width="14" height="14" viewBox="0 0 14 14"><circle cx="4" cy="8.5" r="3" fill="#d0d0d0"/><circle cx="10" cy="8.5" r="3" fill="#d0d0d0"/><circle cx="4" cy="8.5" r="1.6" fill="#3a7fd0"/><circle cx="10" cy="8.5" r="1.6" fill="#3a7fd0"/><path d="M3 5 H11" stroke="#d0d0d0" stroke-width="1.5"/></svg></div>
<div class="a mi" style="left:150px;top:152.05px;color:#e0e0e0"><span class="L">Data Lake Analytics Explorer</span></div>
<div class="a" style="left:126px;top:169.71px;z-index:7;line-height:0"><svg width="14" height="14" viewBox="0 0 14 14"><path d="M2.5 1 V13" stroke="#d0d0d0" stroke-width="1.5"/><rect x="5.5" y="2.5" width="4" height="3" fill="none" stroke="#a070e0"/><rect x="8.5" y="6" width="4" height="3" fill="none" stroke="#a070e0"/><rect x="5.5" y="9.5" width="4" height="3" fill="none" stroke="#a070e0"/></svg></div>
<div class="a mi" style="left:150px;top:169.71px;color:#e0e0e0"><span class="L">SQL Server</span> <i class="c">物</i><i class="c">件</i><i class="c">總</i><i class="c">管</i><span class="L">(S)</span></div>
<div class="a mi" style="left:308px;top:169.71px;color:#e0e0e0"><span class="L">Ctrl+\, Ctrl+S</span></div>
<div class="a" style="left:126px;top:187.37px;z-index:7;line-height:0"><svg width="14" height="14" viewBox="0 0 14 14"><rect x="5.5" y="1.5" width="7" height="9" fill="none" stroke="#d0d0d0"/><path d="M8 3.5 L11 6.5 M11 3.5 L8 6.5" stroke="#e04040"/><path d="M3 6 V9 L1 13 H7 L5 9 V6" fill="#40b0b0" stroke="#d0d0d0"/></svg></div>
<div class="a mi" style="left:150px;top:187.37px;color:#e0e0e0"><i class="c">測</i><i class="c">試</i><i class="c">總</i><i class="c">管</i><span class="L">(T)</span></div>
<div class="a mi" style="left:308px;top:187.37px;color:#e0e0e0"><span class="L">Ctrl+E, T</span></div>
<div class="a" style="left:126px;top:205.03px;z-index:7;line-height:0"><svg width="14" height="14" viewBox="0 0 14 14"><path d="M2 6 Q2 2 5 2 Q7 2 7 4 Q7 2 9 2 Q12 2 12 6 L13 8 V11 Q13 13 7 13 Q1 13 1 11 V8 Z" fill="#d0d0d0"/><circle cx="5" cy="9" r="0.9" fill="#2e2e2e"/><circle cx="9" cy="9" r="0.9" fill="#2e2e2e"/><path d="M4 5 H6 M8 5 H10" stroke="#2e2e2e"/></svg></div>
<div class="a mi" style="left:150px;top:205.03px;color:#e0e0e0"><span class="L">GitHub Copilot</span> <i class="c">聊</i><i class="c">天</i></div>
<div class="a mi" style="left:308px;top:205.03px;color:#e0e0e0"><span class="L">Ctrl+\, C</span></div>
<div class="a" style="left:147px;top:222.33px;width:245px;height:1px;background:#3f3f3f;z-index:6"></div>
<div class="a" style="left:126px;top:226.67px;z-index:7;line-height:0"><svg width="14" height="14" viewBox="0 0 14 14"><path d="M2 5 Q7 1 12 5 L10.5 6.5 Q7 4.5 3.5 6.5 Z" fill="none" stroke="#d0d0d0"/><circle cx="7" cy="8.5" r="0.9" fill="#d0d0d0"/><circle cx="5" cy="11" r="0.9" fill="#d0d0d0"/><circle cx="9" cy="11" r="0.9" fill="#d0d0d0"/><circle cx="3" cy="13" r="0.9" fill="#d0d0d0"/><circle cx="11" cy="13" r="0.9" fill="#d0d0d0"/></svg></div>
<div class="a mi" style="left:150px;top:226.67px;color:#e0e0e0"><i class="c">呼</i><i class="c">叫</i><i class="c">階</i><i class="c">層</i><span class="L">(H)</span></div>
<div class="a mi" style="left:308px;top:226.67px;color:#e0e0e0"><span class="L">Ctrl+W, K</span></div>
<div class="a" style="left:126px;top:244.33px;z-index:7;line-height:0"><svg width="14" height="14" viewBox="0 0 14 14"><circle cx="5.5" cy="9" r="4" fill="none" stroke="#d0d0d0"/><path d="M5.5 7 V9.5 H7.5" stroke="#e8c060"/><path d="M6 2 L9 4.5 L12 3 M9 7 L12 9" stroke="#e8c060" fill="none" stroke-width="1.3"/></svg></div>
<div class="a mi" style="left:150px;top:244.33px;color:#e0e0e0"><i class="c">類</i><i class="c">別</i><i class="c">檢</i><i class="c">視</i><span class="L">(A)</span></div>
<div class="a mi" style="left:308px;top:244.33px;color:#e0e0e0"><span class="L">Ctrl+W, C</span></div>
<div class="a" style="left:126px;top:261.99px;z-index:7;line-height:0"><svg width="14" height="14" viewBox="0 0 14 14"><rect x="1.5" y="1.5" width="11" height="11" fill="none" stroke="#b8b8b8"/><path d="M1.5 4.5 H12.5" stroke="#b8b8b8"/><path d="M5 7 L3.7 8.5 L5 10 M9 7 L10.3 8.5 L9 10" stroke="#4aa0e8" fill="none"/></svg></div>
<div class="a mi" style="left:150px;top:261.99px;color:#e0e0e0"><i class="c">程</i><i class="c">式</i><i class="c">碼</i><i class="c">定</i><i class="c">義</i><i class="c">視</i><i class="c">窗</i><span class="L">(D)</span></div>
<div class="a mi" style="left:308px;top:261.99px;color:#e0e0e0"><span class="L">Ctrl+W, D</span></div>
<div class="a" style="left:126px;top:279.65px;z-index:7;line-height:0"><svg width="14" height="14" viewBox="0 0 14 14"><rect x="2.5" y="1.5" width="10" height="11" fill="none" stroke="#b8b8b8"/><path d="M2.5 4.5 H12.5" stroke="#b8b8b8"/><path d="M1 8 H5 L3.5 6.5 M1 11 H6 M5 9 V13" stroke="#e8c060" fill="none" stroke-width="1.2"/></svg></div>
<div class="a mi" style="left:150px;top:279.65px;color:#e0e0e0"><i class="c">物</i><i class="c">件</i><i class="c">瀏</i><i class="c">覽</i><i class="c">器</i><span class="L">(J)</span></div>
<div class="a mi" style="left:308px;top:279.65px;color:#e0e0e0"><span class="L">Ctrl+W, J</span></div>
<div class="a" style="left:147px;top:296.95px;width:245px;height:1px;background:#3f3f3f;z-index:6"></div>
<div class="a" style="left:126px;top:301.29px;z-index:7;line-height:0"><svg width="14" height="14" viewBox="0 0 14 14"><rect x="2.5" y="2.5" width="8" height="10" rx="1" fill="none" stroke="#d0d0d0"/><path d="M5 1.5 H8" stroke="#d0d0d0" stroke-width="1.5"/><circle cx="10.5" cy="11" r="3" fill="#e03040"/><path d="M9.3 9.8 L11.7 12.2 M11.7 9.8 L9.3 12.2" stroke="#fff" stroke-width="0.9"/></svg></div>
<div class="a mi" style="left:150px;top:301.29px;color:#e0e0e0"><i class="c">錯</i><i class="c">誤</i><i class="c">清</i><i class="c">單</i><span class="L">(I)</span></div>
<div class="a mi" style="left:308px;top:301.29px;color:#e0e0e0"><span class="L">Ctrl+W, E</span></div>
<div class="a" style="left:126px;top:318.95px;z-index:7;line-height:0"><svg width="14" height="14" viewBox="0 0 14 14"><path d="M8.5 4 V1.5 H1.5 V12.5 H8.5 V10" fill="none" stroke="#d0d0d0"/><path d="M5 7 H12.5 M10 4.5 L12.5 7 L10 9.5" fill="none" stroke="#4aa0e8" stroke-width="1.2"/></svg></div>
<div class="a mi" style="left:150px;top:318.95px;color:#e0e0e0"><i class="c">輸</i><i class="c">出</i><span class="L">(Z)</span></div>
<div class="a mi" style="left:308px;top:318.95px;color:#e0e0e0"><span class="L">Ctrl+W, O</span></div>
<div class="a" style="left:126px;top:336.61px;z-index:7;line-height:0"><svg width="14" height="14" viewBox="0 0 14 14"><rect x="2.5" y="2.5" width="9" height="11" rx="1" fill="#c8b070" stroke="#d0d0d0"/><path d="M5 1.5 H9" stroke="#d0d0d0" stroke-width="1.5"/><path d="M4.5 6 H9.5 M4.5 8.5 H9.5 M4.5 11 H9.5" stroke="#2e2e2e"/></svg></div>
<div class="a mi" style="left:150px;top:336.61px;color:#e0e0e0"><i class="c">工</i><i class="c">作</i><i class="c">清</i><i class="c">單</i><span class="L">(K)</span></div>
<div class="a mi" style="left:308px;top:336.61px;color:#e0e0e0"><span class="L">Ctrl+W, T</span></div>
<div class="a" style="left:126px;top:354.27px;z-index:7;line-height:0"><svg width="14" height="14" viewBox="0 0 14 14"><path d="M3 10.5 V6 A4 4 0 0 1 11 6 V10.5 L12 11.5 H2 Z" fill="none" stroke="#e8c060" stroke-width="1.2"/><path d="M5.5 13 H8.5" stroke="#e8c060"/></svg></div>
<div class="a mi" style="left:150px;top:354.27px;color:#e0e0e0"><i class="c">通</i><i class="c">知</i><span class="L">(N)</span></div>
<div class="a mi" style="left:308px;top:354.27px;color:#e0e0e0"><span class="L">Ctrl+\, Ctrl+N</span></div>
<div class="a" style="left:124px;top:370px;width:270px;height:18px;background:#3d3d3d;border:1px solid #555;z-index:6"></div>
<div class="a" style="left:126px;top:371.93px;z-index:7;line-height:0"><svg width="14" height="14" viewBox="0 0 14 14"><rect x="1.5" y="4.5" width="11" height="8" rx="1" fill="none" stroke="#e05060" stroke-width="1.2"/><path d="M5 4.5 V2.5 H9 V4.5 M1.5 8 H12.5" fill="none" stroke="#e05060" stroke-width="1.2"/></svg></div>
<div class="a mi" style="left:150px;top:371.93px;color:#e0e0e0"><i class="c">工</i><i class="c">具</i><i class="c">箱</i><span class="L">(S)</span></div>
<div class="a mi" style="left:308px;top:371.93px;color:#e0e0e0"><span class="L">Ctrl+W, X</span></div>
<div class="a" style="left:126px;top:389.59px;z-index:7;line-height:0"><svg width="14" height="14" viewBox="0 0 14 14"><rect x="1.5" y="1.5" width="11" height="11" fill="none" stroke="#d0d0d0"/><path d="M1.5 4 H12.5" stroke="#d0d0d0"/><path d="M3.5 6.5 L5.5 8.3 L3.5 10 M6 10.5 H8" fill="none" stroke="#d0d0d0"/></svg></div>
<div class="a mi" style="left:150px;top:389.59px;color:#e0e0e0"><i class="c">終</i><i class="c">端</i><i class="c">機</i></div>
<div class="a mi" style="left:308px;top:389.59px;color:#e0e0e0"><span class="L">Ctrl+`</span></div>
<div class="a mi" style="left:150px;top:407.25px;color:#e0e0e0"><i class="c">其</i><i class="c">他</i><i class="c">視</i><i class="c">窗</i><span class="L">(E)</span></div>
<svg class="a" style="left:385px;top:410.25px;z-index:7" width="5" height="8" viewBox="0 0 5 8"><path d="M0.5 0.5 L4.5 4 L0.5 7.5 Z" fill="#d8d8d8"/></svg>
<div class="a" style="left:147px;top:424.55px;width:245px;height:1px;background:#3f3f3f;z-index:6"></div>
<div class="a mi" style="left:150px;top:428.89px;color:#e0e0e0"><i class="c">工</i><i class="c">具</i><i class="c">列</i><span class="L">(T)</span></div>
<svg class="a" style="left:385px;top:431.89px;z-index:7" width="5" height="8" viewBox="0 0 5 8"><path d="M0.5 0.5 L4.5 4 L0.5 7.5 Z" fill="#d8d8d8"/></svg>
<div class="a" style="left:126px;top:446.55px;z-index:7;line-height:0"><svg width="14" height="14" viewBox="0 0 14 14"><path d="M1.5 5 V1.5 H5 M9 1.5 H12.5 V5 M12.5 9 V12.5 H9 M5 12.5 H1.5 V9 M2 2 L5 5 M12 2 L9 5 M12 12 L9 9 M2 12 L5 9" fill="none" stroke="#d0d0d0"/></svg></div>
<div class="a mi" style="left:150px;top:446.55px;color:#e0e0e0"><i class="c">全</i><i class="c">螢</i><i class="c">幕</i><span class="L">(U)</span></div>
<div class="a mi" style="left:308px;top:446.55px;color:#e0e0e0"><span class="L">Shift+Alt+Enter</span></div>
<div class="a" style="left:126px;top:464.21px;z-index:7;line-height:0"><svg width="14" height="14" viewBox="0 0 14 14"><rect x="4.5" y="1.5" width="8" height="7" fill="none" stroke="#5c5c5c"/><rect x="3" y="3" width="8" height="7" fill="none" stroke="#5c5c5c"/><rect x="1.5" y="4.5" width="8" height="8" fill="#5c5c5c"/></svg></div>
<div class="a mi" style="left:150px;top:464.21px;color:#585858"><i class="c">所</i><i class="c">有</i><i class="c">視</i><i class="c">窗</i><span class="L">(L)</span></div>
<div class="a mi" style="left:308px;top:464.21px;color:#585858"><span class="L">Shift+Alt+M</span></div>
<div class="a" style="left:147px;top:481.51px;width:245px;height:1px;background:#3f3f3f;z-index:6"></div>
<div class="a" style="left:126px;top:485.85px;z-index:7;line-height:0"><svg width="14" height="14" viewBox="0 0 14 14"><path d="M1.5 1.5 H9.5 V4.5 H1.5 Z M1.5 4.5 V10.5 H6" fill="none" stroke="#5c5c5c"/><path d="M4 7.5 H9.5 M7 5 V13 L9 11 L11 14" fill="none" stroke="#5c5c5c"/></svg></div>
<div class="a mi" style="left:150px;top:485.85px;color:#585858"><i class="c">定</i><i class="c">位</i><i class="c">順</i><i class="c">序</i><span class="L">(B)</span></div>
<div class="a" style="left:147px;top:503.15px;width:245px;height:1px;background:#3f3f3f;z-index:6"></div>
<div class="a" style="left:126px;top:507.49px;z-index:7;line-height:0"><svg width="14" height="14" viewBox="0 0 14 14"><circle cx="7" cy="7" r="5.5" fill="none" stroke="#4aa0e8" stroke-width="1.2"/><path d="M10 7 H4.5 M6.8 4.5 L4.3 7 L6.8 9.5" fill="none" stroke="#4aa0e8" stroke-width="1.2"/></svg></div>
<div class="a mi" style="left:150px;top:507.49px;color:#e0e0e0"><i class="c">向</i><i class="c">後</i><i class="c">巡</i><i class="c">覽</i><span class="L">(B)</span></div>
<div class="a mi" style="left:308px;top:507.49px;color:#e0e0e0"><span class="L">Ctrl+-</span></div>
<div class="a" style="left:126px;top:525.15px;z-index:7;line-height:0"><svg width="14" height="14" viewBox="0 0 14 14"><circle cx="7" cy="7" r="5.5" fill="none" stroke="#5c5c5c" stroke-width="1.2"/><path d="M4 7 H9.5 M7.2 4.5 L9.7 7 L7.2 9.5" fill="none" stroke="#5c5c5c" stroke-width="1.2"/></svg></div>
<div class="a mi" style="left:150px;top:525.15px;color:#585858"><i class="c">向</i><i class="c">前</i><i class="c">巡</i><i class="c">覽</i><span class="L">(F)</span></div>
<div class="a mi" style="left:308px;top:525.15px;color:#585858"><span class="L">Ctrl+Shift+-</span></div>
<div class="a mi" style="left:150px;top:542.81px;color:#e0e0e0"><i class="c">下</i><i class="c">一</i><i class="c">個</i><i class="c">工</i><i class="c">作</i><span class="L">(X)</span></div>
<div class="a mi" style="left:150px;top:560.47px;color:#e0e0e0"><i class="c">上</i><i class="c">一</i><i class="c">個</i><i class="c">工</i><i class="c">作</i><span class="L">(R)</span></div>
<div class="a" style="left:147px;top:577.77px;width:245px;height:1px;background:#3f3f3f;z-index:6"></div>
<div class="a" style="left:126px;top:582.11px;z-index:7;line-height:0"><svg width="14" height="14" viewBox="0 0 14 14"><path d="M1.5 12.5 L6.5 7.5" stroke="#d0d0d0" stroke-width="2" stroke-linecap="round"/><path d="M5.5 7 A3.8 3.8 0 0 1 11 1.5 L9 3.6 L10.4 5 L12.5 3 A3.8 3.8 0 0 1 7 8.5 Z" fill="#d0d0d0"/></svg></div>
<div class="a mi" style="left:150px;top:582.11px;color:#e0e0e0"><i class="c">屬</i><i class="c">性</i><i class="c">視</i><i class="c">窗</i><span class="L">(W)</span></div>
<div class="a mi" style="left:308px;top:582.11px;color:#e0e0e0"><span class="L">Ctrl+W, P</span></div>
<div class="a" style="left:122px;top:592px;width:275px;height:5px;background:#d4d4d4;z-index:8"></div>
<!-- MENU END -->

<!-- TOAST -->
<div class="a" style="left:721px;top:467px;width:289px;height:123px;background:#dedede;border-radius:7px;box-shadow:0 0 2px rgba(0,0,0,.5);z-index:20"></div>
<svg class="a" style="left:732px;top:477px;z-index:21" width="14" height="14" viewBox="0 0 14 14"><rect x="1" y="1" width="8" height="8" fill="#f4f4f4" stroke="#e04a2a" stroke-dasharray="1.5 1"/><path d="M5 5 L10 10 M10 5 L5 10" stroke="#909090"/><circle cx="11" cy="6" r="1.8" fill="none" stroke="#2a9ae0"/><circle cx="6" cy="12" r="1.6" fill="none" stroke="#2a9ae0"/></svg>
<div class="a" style="left:752px;top:477px;font-size:10px;color:#333;line-height:14px;z-index:21"><i class="c">剪</i><i class="c">取</i><i class="c">工</i><i class="c">具</i></div>
<svg class="a" style="left:952px;top:482px;z-index:21" width="12" height="4" viewBox="0 0 12 4"><circle cx="2" cy="2" r="0.8" fill="#555"/><circle cx="6" cy="2" r="0.8" fill="#555"/><circle cx="10" cy="2" r="0.8" fill="#555"/></svg>
<svg class="a" style="left:985px;top:480px;z-index:21" width="10" height="10" viewBox="0 0 10 10"><path d="M1 1 L9 9 M9 1 L1 9" stroke="#555" stroke-width="1"/></svg>
<div class="a" style="left:734px;top:506px;font-size:10.8px;color:#222;line-height:15px;z-index:21"><i class="c">螢</i><i class="c">幕</i><i class="c">擷</i><i class="c">取</i><i class="c">畫</i><i class="c">面</i><i class="c">已</i><i class="c">複</i><i class="c">製</i><i class="c">到</i><i class="c">剪</i><i class="c">貼</i><i class="c">簿</i><span style="position:relative;top:-3px;margin-left:3px">·</span></div>
<div class="a" style="left:734px;top:522px;font-size:10.8px;color:#777;line-height:15px;z-index:21"><i class="c">自</i><i class="c">動</i><i class="c">儲</i><i class="c">存</i><i class="c">至</i><i class="c">螢</i><i class="c">幕</i><i class="c">擷</i><i class="c">取</i><i class="c">畫</i><i class="c">面</i><i class="c">資</i><i class="c">料</i><i class="c">夾</i><span style="position:relative;top:-3px;margin-left:3px">·</span></div>
<div class="a" style="left:734px;top:554px;width:264px;height:24px;background:#f6f6f6;border-radius:4px;z-index:21;box-shadow:0 1px 0 #d0d0d0"></div>
<div class="a" style="left:734px;top:558px;width:264px;text-align:center;font-size:10.5px;color:#222;line-height:15px;z-index:22"><i class="c">標</i><i class="c">記</i><i class="c">並</i><i class="c">分</i><i class="c">享</i></div>
<!-- ANNOTATIONS -->
<svg class="a" style="left:0;top:0;z-index:30" width="1024" height="602" viewBox="0 0 1024 602">
<g fill="none" stroke="#e4192b" stroke-width="4" stroke-linecap="round" stroke-linejoin="round">
<path d="M69.5 3.5 L71.5 26"/>
<path d="M91 34.5 L122 16.5 M102.5 11.5 L122 16.5 L117 34.5"/>
<path d="M75.3 348 Q79 340 84.5 341.5 Q89 343.5 85 350 Q81 356 75.8 363.5 L96.8 350.7"/>
<path d="M87.7 375.4 L119.4 374.8 M104.9 362 L119.4 374.8 L104.9 388.9"/>
</g>
<circle cx="77.6" cy="23.5" r="2.2" fill="#e4192b"/>
<circle cx="96.8" cy="359.7" r="2" fill="#e4192b"/>
</svg>
</body></html>
